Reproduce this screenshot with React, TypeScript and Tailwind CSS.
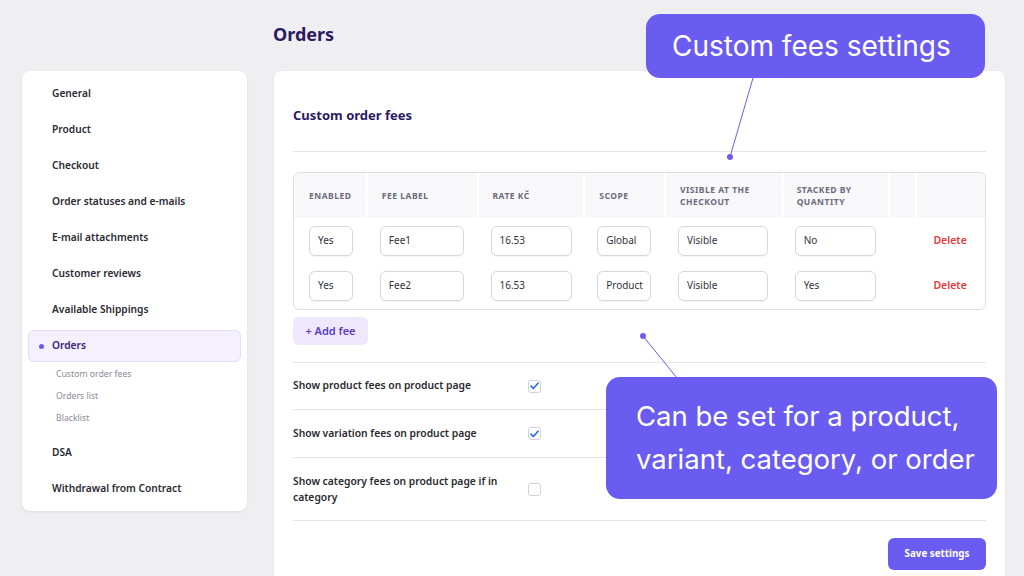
import React from "react";

const navTop = [
  "General",
  "Product",
  "Checkout",
  "Order statuses and e-mails",
  "E-mail attachments",
  "Customer reviews",
  "Available Shippings",
];

const cols = [
  { label: ["ENABLED"], w: "w-[72px]", pl: "pl-[15px]" },
  { label: ["FEE LABEL"], w: "w-[111px]", pl: "pl-[14px]" },
  { label: ["RATE KČ"], w: "w-[107px]", pl: "pl-[14px]" },
  { label: ["SCOPE"], w: "w-[81px]", pl: "pl-[14px]" },
  { label: ["VISIBLE AT THE", "CHECKOUT"], w: "w-[118px]", pl: "pl-[14px]" },
  { label: ["STACKED BY", "QUANTITY"], w: "w-[107px]", pl: "pl-[13px]" },
  { label: [], w: "w-[27px]", pl: "" },
  { label: [], w: "w-[70px]", pl: "" },
];

const inputW = ["w-[44px]", "w-[84px]", "w-[81px]", "w-[54px]", "w-[90px]", "w-[81px]"];

const rows = [
  ["Yes", "Fee1", "16.53", "Global", "Visible", "No"],
  ["Yes", "Fee2", "16.53", "Product", "Visible", "Yes"],
];

function Check({ checked }: { checked: boolean }) {
  return (
    <div className="w-[13px] h-[13px] rounded-[3px] border border-[#cfd0d8] bg-white flex items-center justify-center">
      {checked && (
        <svg width="9" height="8" viewBox="0 0 9 8">
          <path d="M1 4.2 L3.4 6.5 L8 1.2" fill="none" stroke="#2f6fdc" strokeWidth="1.7" strokeLinecap="round" strokeLinejoin="round" />
        </svg>
      )}
    </div>
  );
}

export default function App() {
  return (
    <div
      className="relative w-[1024px] h-[576px] overflow-hidden bg-[#efeff2] flex pl-[22px] gap-[27px]"
      style={{ fontFamily: '"Noto Sans", "Open Sans", Arial, sans-serif' }}
    >
      {/* Sidebar */}
      <div className="mt-[71px] w-[225px] shrink-0 self-start bg-white rounded-lg shadow-[0_1px_3px_rgba(0,0,0,0.08)] px-[6px] pt-[5px] pb-[4px]">
        {navTop.map((t) => (
          <div key={t} className="h-[36px] flex items-center pl-[24px] text-[10.2px] font-semibold text-[#2b2b33]">
            {t}
          </div>
        ))}
        <div className="my-[2px] h-[32px] rounded-md bg-[#f4f0fe] border border-[#e6dcfb] flex items-center pl-[10px] text-[10.2px] font-semibold text-[#3a2373]">
          <span className="w-[5px] h-[5px] rounded-full bg-[#6b5cf1] mr-[8px]" />
          Orders
        </div>
        <div className="pb-[5px]">
          {["Custom order fees", "Orders list", "Blacklist"].map((t) => (
            <div key={t} className="h-[22px] flex items-center pl-[28px] text-[8.7px] text-[#8a8a96]">
              {t}
            </div>
          ))}
        </div>
        {["DSA", "Withdrawal from Contract"].map((t) => (
          <div key={t} className="h-[36px] flex items-center pl-[24px] text-[10.2px] font-semibold text-[#2b2b33]">
            {t}
          </div>
        ))}
      </div>

      {/* Main */}
      <div className="w-[731px] shrink-0 flex flex-col">
        <div className="h-[71px] shrink-0 pt-[22px] -ml-[1px] text-[18px] font-bold text-[#2b1a63] leading-[24px]">Orders</div>
        <div className="shrink-0 bg-white rounded-lg shadow-[0_1px_3px_rgba(0,0,0,0.08)] px-[19px] pb-[20px]">
          <div className="h-[81px] pt-[35px] border-b border-[#e6e6ea] text-[13px] font-bold text-[#2b1a63] leading-[18px]">
            Custom order fees
          </div>

          {/* Table */}
          <div className="mt-[20px] border border-[#dfdfe5] rounded-md overflow-hidden">
            <div className="flex h-[45px] bg-[#f8f8fa]">
              {cols.map((c, i) => (
                <div
                  key={i}
                  className={`${c.w} ${c.pl} flex flex-col justify-center text-[8.5px] font-bold tracking-[0.06em] leading-[12px] text-[#6b6b7a] ${i > 0 ? "border-l-2 border-white" : ""}`}
                >
                  {c.label.map((l) => (
                    <span key={l}>{l}</span>
                  ))}
                </div>
              ))}
            </div>
            {rows.map((r, ri) => (
              <div key={ri} className="flex h-[45px] items-center">
                {r.map((v, i) => (
                  <div key={i} className={`${cols[i].w} ${cols[i].pl} flex items-center`}>
                    <div
                      className={`${inputW[i]} h-[30px] rounded-md border border-[#d6d6de] shadow-[0_1px_1px_rgba(0,0,0,0.05)] flex items-center pl-[8px] text-[10px] text-[#33333b]`}
                    >
                      {v}
                    </div>
                  </div>
                ))}
                <div className="w-[27px]" />
                <div className="w-[70px] flex justify-center text-[10.5px] font-semibold text-[#e5393b]">Delete</div>
              </div>
            ))}
            <div className="h-[1px]" />
          </div>

          <button className="mt-[7px] h-[28px] w-[75px] rounded-md bg-[#efe8fd] text-[11px] font-semibold text-[#5a3cc2] flex items-center justify-center">
            + Add fee
          </button>

          <div className="mt-[17px] border-t border-[#e6e6ea]">
            <div className="h-[47px] flex items-center border-b border-[#e6e6ea]">
              <div className="w-[235px] text-[10.3px] font-semibold text-[#2a2a30]">Show product fees on product page</div>
              <Check checked />
            </div>
            <div className="h-[48px] flex items-center border-b border-[#e6e6ea]">
              <div className="w-[235px] text-[10.3px] font-semibold text-[#2a2a30]">Show variation fees on product page</div>
              <Check checked />
            </div>
            <div className="h-[63px] flex items-center border-b border-[#e6e6ea]">
              <div className="w-[235px] pr-[20px] text-[10.3px] leading-[16px] font-semibold text-[#2a2a30]">
                Show category fees on product page if in category
              </div>
              <Check checked={false} />
            </div>
          </div>

          <div className="mt-[17px] flex justify-end">
            <button className="h-[32px] w-[98px] rounded-md bg-[#6b5cf1] text-[9.8px] font-bold text-white">Save settings</button>
          </div>
        </div>
      </div>

      {/* Annotation lines */}
      <svg className="absolute inset-0 pointer-events-none" width="1024" height="576">
        <line x1="753" y1="78" x2="730" y2="157" stroke="#6b5cf1" strokeWidth="1" />
        <circle cx="730" cy="157" r="3" fill="#6b5cf1" />
        <line x1="643" y1="336" x2="677" y2="378" stroke="#6b5cf1" strokeWidth="1" />
        <circle cx="643" cy="336" r="3" fill="#6b5cf1" />
      </svg>

      {/* Callouts */}
      <div
        className="absolute left-[646px] top-[14px] w-[339px] h-[64px] rounded-[14px] bg-[#6b5cf1] text-white text-[28px] flex items-center pl-[26px]"
        style={{ fontFamily: 'Inter, "Noto Sans", sans-serif' }}
      >
        Custom fees settings
      </div>
      <div
        className="absolute left-[606px] top-[377px] w-[391px] h-[122px] rounded-[14px] bg-[#6b5cf1] text-white text-[27.5px] leading-[43px] flex flex-col justify-center pl-[30px]"
        style={{ fontFamily: 'Inter, "Noto Sans", sans-serif' }}
      >
        <span>Can be set for a product,</span>
        <span>variant, category, or order</span>
      </div>
    </div>
  );
}
